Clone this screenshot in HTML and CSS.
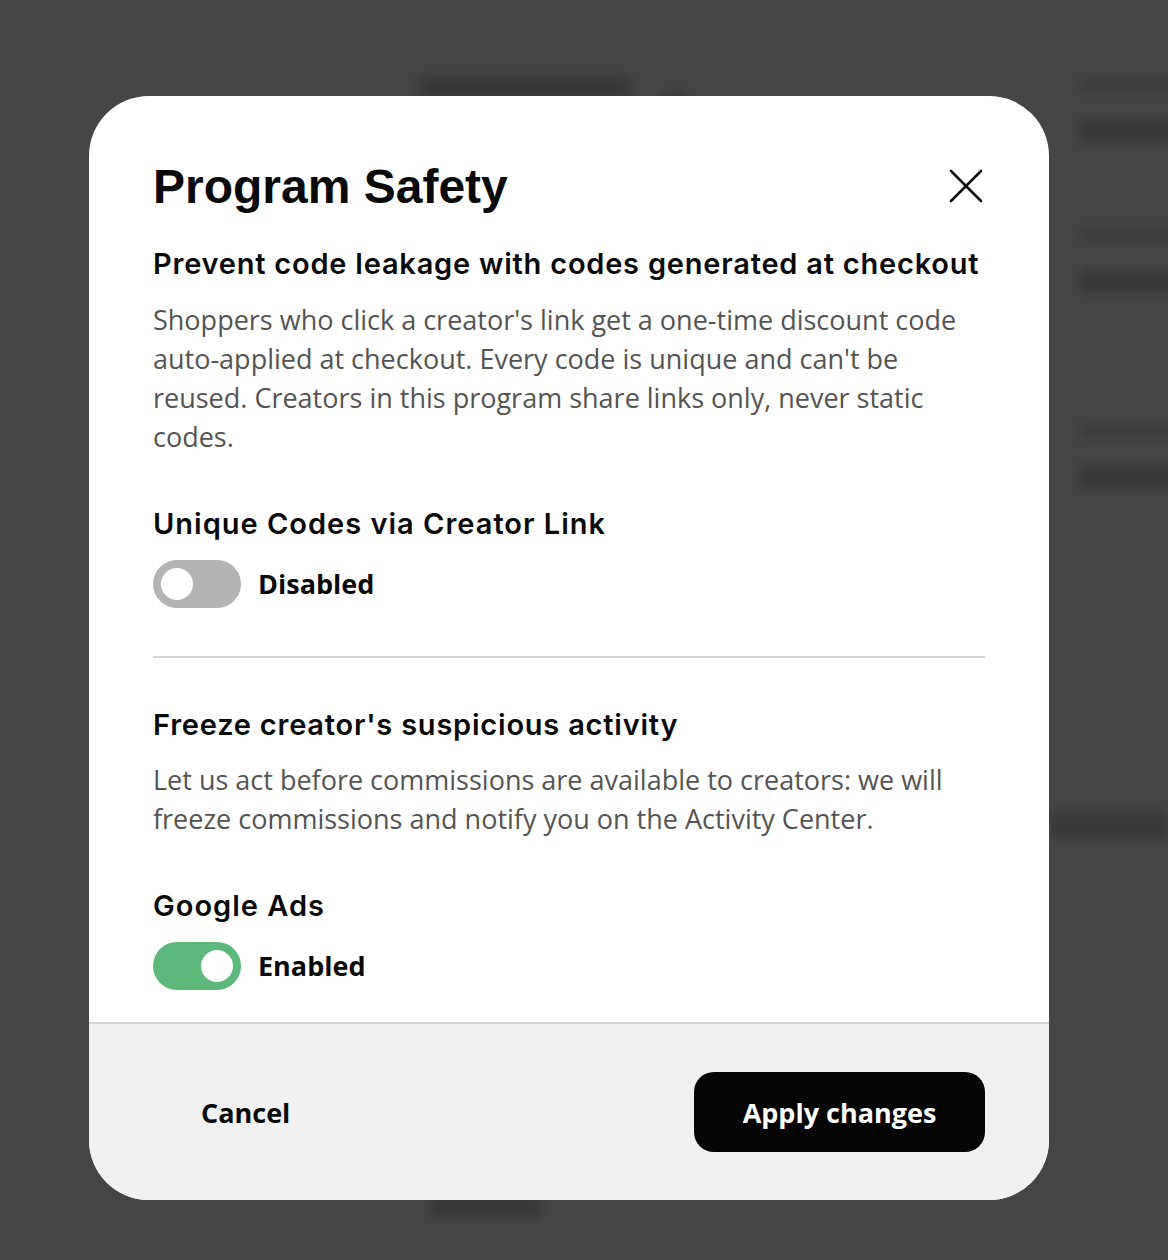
FILE: index.html
```html
<!DOCTYPE html>
<html lang="en">
<head>
<meta charset="utf-8">
<title>Program Safety</title>
<link rel="stylesheet" href="styles.css">
</head>
<body>
<div class="backdrop" aria-hidden="true">
  <div class="bg-col bg-mid">
    <div class="bg-row"><span class="blob w210"></span><span class="blob dot"></span></div>
  </div>
  <div class="bg-col bg-right">
    <span class="blob thin w120"></span><span class="blob w100 g1"></span>
    <span class="blob thin w120 g2"></span><span class="blob w100 g1"></span>
    <span class="blob thin w120 g3"></span><span class="blob w100 g1"></span>
  </div>
  <div class="bg-line"></div>
  <div class="bg-bottom"><span class="blob w110"></span></div>
</div>

<div class="overlay">
  <div class="modal" role="dialog" aria-labelledby="modal-title">
    <div class="modal-body">
      <div class="modal-head">
        <h1 id="modal-title" class="modal-title">Program Safety</h1>
        <button class="close-btn" aria-label="Close">
          <svg width="34" height="34" viewBox="0 0 34 34"><path d="M2 2 L32 32 M32 2 L2 32" stroke="#111" stroke-width="2.6" fill="none" stroke-linecap="round"/></svg>
        </button>
      </div>

      <section class="section">
        <h2 class="sub-title">Prevent code leakage with codes generated at checkout</h2>
        <p class="desc">Shoppers who click a creator's link get a one-time discount code auto-applied at checkout. Every code is unique and can't be reused. Creators in this program share links only, never static codes.</p>
        <h3 class="opt-title">Unique Codes via Creator Link</h3>
        <div class="toggle-row">
          <span class="toggle off"><span class="knob"></span></span>
          <span class="toggle-label">Disabled</span>
        </div>
      </section>

      <hr class="divider">

      <section class="section">
        <h2 class="sub-title">Freeze creator's suspicious activity</h2>
        <p class="desc">Let us act before commissions are available to creators: we will freeze commissions and notify you on the Activity Center.</p>
        <h3 class="opt-title">Google Ads</h3>
        <div class="toggle-row">
          <span class="toggle on"><span class="knob"></span></span>
          <span class="toggle-label">Enabled</span>
        </div>
      </section>
    </div>
    <div class="modal-foot">
      <button class="btn-cancel">Cancel</button>
      <button class="btn-apply">Apply changes</button>
    </div>
  </div>
</div>
</body>
</html>
```

FILE: styles.css
```css
* { box-sizing: border-box; }
html, body { margin: 0; padding: 0; }
body {
  width: 1168px;
  height: 1260px;
  background: #454545;
  position: relative;
  overflow: hidden;
  font-family: "Open Sans", "Noto Sans", sans-serif;
}

/* blurred page behind the dialog */
.backdrop {
  position: absolute;
  inset: 0;
  filter: blur(5px);
}
.blob {
  display: block;
  height: 22px;
  background: #383838;
  border-radius: 4px;
}
.blob.thin { height: 14px; background: #3e3e3e; }
.bg-col { position: absolute; }
.bg-mid { left: 420px; top: 72px; }
.bg-row { display: flex; gap: 30px; align-items: center; }
.w210 { width: 210px; }
.dot { width: 30px; height: 12px; margin-top: 20px; border-radius: 50%; background: #3a3a3a; }
.bg-right { left: 1080px; top: 78px; display: flex; flex-direction: column; }
.w120 { width: 120px; }
.w100 { width: 100px; }
.g1 { margin-top: 28px; }
.g2 { margin-top: 86px; }
.g3 { margin-top: 132px; }
.w110 { width: 110px; }
.bg-line {
  position: absolute; left: 1049px; top: 812px; width: 119px; height: 26px;
  background: #393939; border-radius: 4px;
}
.bg-bottom { position: absolute; left: 430px; top: 1196px; }

/* dialog */
.overlay {
  position: relative;
  padding: 96px 0 0 89px;
}
.modal {
  width: 960px;
  height: 1104px;
  background: #fff;
  border-radius: 60px;
  overflow: hidden;
  display: flex;
  flex-direction: column;
}
.modal-body {
  flex: 1;
  padding: 60px 64px 0 64px;
}
.modal-head {
  display: flex;
  justify-content: space-between;
  align-items: center;
  height: 60px;
}
.modal-title {
  margin: 0;
  font-family: "Liberation Sans", Arial, sans-serif;
  font-weight: 700;
  font-size: 48px;
  color: #0a0a0a;
}
.close-btn {
  border: 0;
  background: none;
  padding: 0;
  margin-right: 2px;
  width: 34px;
  height: 34px;
  display: flex;
}
.section { display: flex; flex-direction: column; }
.sub-title {
  margin: 28px 0 0 0;
  font-family: "Inter", sans-serif;
  font-weight: 600;
  font-size: 29px;
  line-height: 40px;
  letter-spacing: 0.78px;
  color: #0a0a0a;
}
.desc {
  margin: 16px 0 0 0;
  font-size: 27px;
  line-height: 39px;
  color: #545454;
  letter-spacing: 0;
}
.opt-title {
  margin: 48px 0 0 0;
  font-family: "Inter", sans-serif;
  font-weight: 600;
  font-size: 29px;
  line-height: 40px;
  letter-spacing: 1px;
  color: #0a0a0a;
}
.toggle-row {
  margin-top: 16px;
  display: flex;
  align-items: center;
  gap: 17px;
}
.toggle {
  width: 88px;
  height: 48px;
  border-radius: 24px;
  display: flex;
  align-items: center;
  padding: 0 8px;
}
.toggle.off { background: #b4b4b4; justify-content: flex-start; }
.toggle.on { background: #5cb87b; justify-content: flex-end; }
.knob {
  width: 32px;
  height: 32px;
  border-radius: 50%;
  background: #fff;
}
.toggle-label {
  font-size: 27px;
  font-weight: 700;
  color: #0a0a0a;
  line-height: 46px;
}
.divider {
  margin: 48px 0 19px 0;
  border: 0;
  border-top: 2px solid #d4d4d4;
}
.section + .divider + .section .desc { margin-top: 15px; }
.modal-foot {
  height: 178px;
  background: #f1f1f1;
  border-top: 2px solid #d4d4d4;
  display: flex;
  justify-content: space-between;
  align-items: center;
  padding: 0 64px 0 64px;
}
.btn-cancel {
  border: 0;
  background: none;
  font-family: "Open Sans", sans-serif;
  font-weight: 700;
  font-size: 27px;
  color: #0a0a0a;
  padding: 0 48px;
  height: 80px;
}
.btn-apply {
  border: 0;
  background: #050505;
  color: #fff;
  font-family: "Open Sans", sans-serif;
  font-weight: 700;
  font-size: 27px;
  width: 291px;
  height: 80px;
  border-radius: 20px;
}
```
